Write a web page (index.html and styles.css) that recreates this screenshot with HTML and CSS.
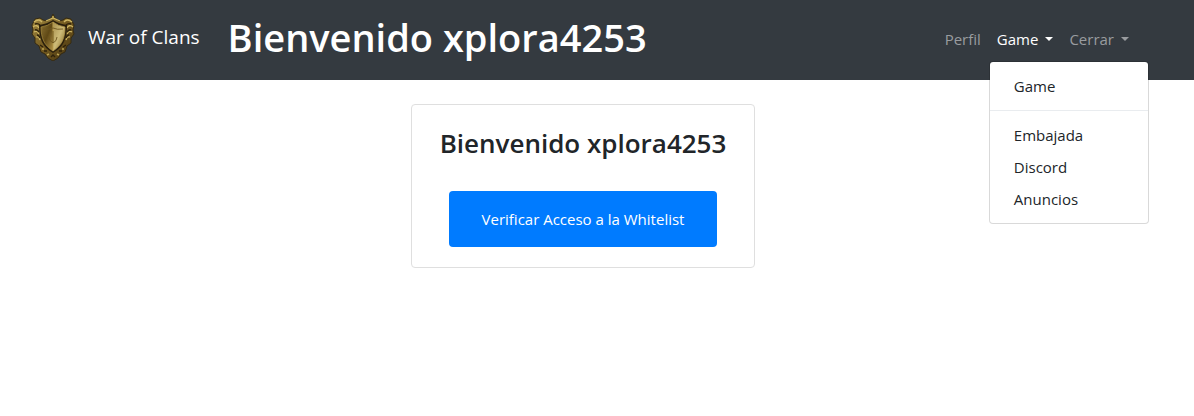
FILE: index.html
```html
<!DOCTYPE html>
<html lang="es">
<head>
<meta charset="utf-8">
<meta name="viewport" content="width=device-width, initial-scale=1">
<title>War of Clans</title>
<link rel="stylesheet" href="styles.css">
</head>
<body>
<header class="navbar">
  <a class="brand" href="#">
    <svg class="brand-logo" viewBox="0 0 44 48" aria-hidden="true">
      <defs>
        <linearGradient id="rim" x1="0" y1="0" x2="1" y2="1">
          <stop offset="0" stop-color="#a38a42"/><stop offset=".5" stop-color="#735a20"/><stop offset="1" stop-color="#43310e"/>
        </linearGradient>
        <linearGradient id="left" x1="0" y1="0" x2="1" y2="1">
          <stop offset="0" stop-color="#8d7434"/><stop offset=".5" stop-color="#5f4815"/><stop offset="1" stop-color="#b6984a"/>
        </linearGradient>
        <linearGradient id="right" x1="0" y1="0" x2="1" y2="1">
          <stop offset="0" stop-color="#a8914d"/><stop offset=".5" stop-color="#cdbb78"/><stop offset="1" stop-color="#80641f"/>
        </linearGradient>
      </defs>
      <path d="M22 1l2 4 4 3 4-1 3-2 5 1 3 6-1 5 1 4-3 4v5l-4 3-2 6-4 2-3 4-5 3-5-3-3-4-4-2-2-6-4-3v-5l-3-4 1-4-1-5 3-6 5-1 3 2 4 1 4-3z" fill="url(#rim)" stroke="#352a12"/>
      <path d="M3 9q5-4 8 0M2 14q4-3 6 1M3 19q3-2 5 2M5 24q3-1 4 3M41 9q-5-4-8 0M42 14q-4-3-6 1M41 19q-3-2-5 2M39 24q-3-1-4 3M15 8l7-3 7 3" fill="none" stroke="#cdb563" stroke-width="1.3"/>
      <path d="M4 11q3-1 5 1M4 17q2-1 4 2M6 22q2 0 3 3M40 11q-3-1-5 1M40 17q-2-1-4 2M38 22q-2 0-3 3M9 32l3 2M13 38l3 0M35 32l-3 2M31 38l-3 0M20 44l2-2 2 2" fill="none" stroke="#2e220b" stroke-width="1.4"/>
      <path d="M22 7q-6 4-14 5c0 13 3 22 14 28 11-6 14-15 14-28q-8-1-14-5z" fill="#2b200c"/>
      <path d="M22 9q-5 4-12 5c0 11 3 18 12 24z" fill="url(#left)" stroke="#a88c3f" stroke-width=".7"/>
      <path d="M22 9q5 4 12 5c0 11-3 18-12 24z" fill="url(#right)" stroke="#b99c4c" stroke-width=".7"/>
      <path d="M12 16q6 1 10-1 4 2 10 1M22 18v12M18 24q0 4 4 6 4-2 4-6" fill="none" stroke="#6e571f" stroke-width=".9"/>
      <path d="M11 36l2 0M16 42l2-1M33 36l-2 0M28 42l-2-1M22 3v2" stroke="#bba351" stroke-width="1.6"/>
    </svg>
    <span>War of Clans</span>
  </a>
  <h1 class="title">Bienvenido xplora4253</h1>
  <nav class="nav">
    <a class="nav-link" href="#">Perfil</a>
    <div class="dropdown">
      <button class="nav-link active caret" type="button" aria-expanded="true">Game</button>
      <div class="menu">
        <a class="menu-item" href="#">Game</a>
        <hr class="divider">
        <a class="menu-item" href="#">Embajada</a>
        <a class="menu-item" href="#">Discord</a>
        <a class="menu-item" href="#">Anuncios</a>
      </div>
    </div>
    <button class="nav-link caret" type="button">Cerrar</button>
  </nav>
</header>
<main class="content">
  <section class="card">
    <h2 class="card-title">Bienvenido xplora4253</h2>
    <button class="primary" type="button">Verificar Acceso a la Whitelist</button>
  </section>
</main>
</body>
</html>
```
FILE: styles.css
```css
* { box-sizing: border-box; }
body {
  margin: 0;
  background: #fff;
  color: #212529;
  font: 15px/24px "Open Sans", "Noto Sans", sans-serif;
}
a { text-decoration: none; color: inherit; }
button { font: inherit; border: 0; background: none; cursor: pointer; }
h1, h2 { margin: 0; font-weight: 600; }
.navbar {
  display: flex;
  align-items: center;
  min-height: 80px;
  padding: 8px 57px 14px 31px;
  background: #343a40;
}
.brand {
  display: flex;
  align-items: center;
  gap: 13px;
  color: #fff;
  font-size: 19px;
  white-space: nowrap;
}
.brand-logo { width: 44px; height: 48px; }
.title {
  margin-left: 28px;
  color: #fff;
  font-size: 38px;
  line-height: 46px;
  white-space: nowrap;
}
.nav { display: flex; margin-left: auto; padding-top: 4px; }
.nav-link {
  display: flex;
  align-items: center;
  padding: 8px;
  color: #999c9f;
}
.nav-link.active { color: #fff; }
.caret::after {
  content: "";
  margin-left: 7px;
  border: 4px solid transparent;
  border-top-color: currentColor;
  border-bottom: 0;
}
.dropdown { position: relative; }
.menu {
  position: absolute;
  top: 100%;
  left: 0;
  min-width: 160px;
  margin-top: 2px;
  padding: 8px 0;
  background: #fff;
  background-clip: padding-box;
  border: 1px solid rgba(0, 0, 0, .15);
  border-radius: 4px;
}
.menu-item { display: block; padding: 4px 24px; }
.divider { margin: 8px 0; border: 0; border-top: 1px solid #e9ecef; }
.content {
  display: flex;
  justify-content: center;
  padding: 24px 28px 24px 0;
}
.card {
  display: flex;
  flex-direction: column;
  align-items: center;
  gap: 30px;
  padding: 20px 28px;
  border: 1px solid #dfdfdf;
  border-radius: 4px;
}
.card-title { font-size: 26px; line-height: 36px; }
.primary {
  padding: 16px 33px;
  border-radius: 4px;
  background: #007bff;
  color: #fff;
}
```
